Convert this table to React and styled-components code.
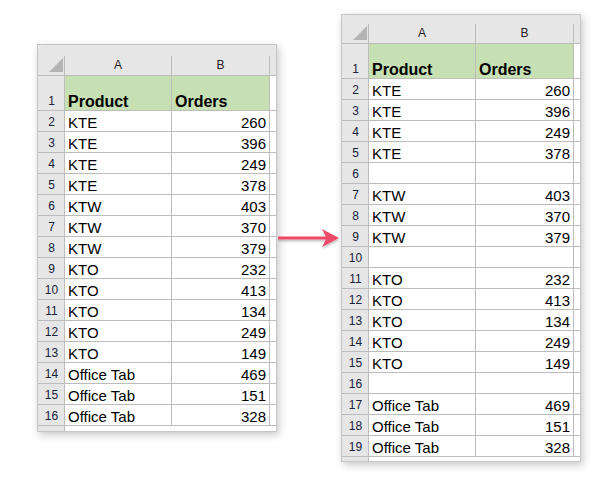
import React from "react";
import styled, { createGlobalStyle } from "styled-components";

const GlobalStyle = createGlobalStyle`
  html, body { margin: 0; padding: 0; background: #ffffff; }
  body { font-family: "Liberation Sans", Arial, sans-serif; }
`;

const GRID = "#bcbcbc";
const HEAD_BG = "#e6e6e6";

const Page = styled.div`
  display: flex;
  align-items: flex-start;
  padding-left: 37px;
  width: 595px;
  height: 483px;
  box-sizing: border-box;
`;

const Sheet = styled.div`
  margin-top: ${(p) => p.$top}px;
  width: 240px;
  box-sizing: border-box;
  border: 1px solid #c6c6c6;
  background: ${HEAD_BG};
  box-shadow: 2px 3px 8px rgba(0, 0, 0, 0.22);
`;

const TopStrip = styled.div`
  height: ${(p) => p.$h}px;
`;

const Grid = styled.div`
  display: grid;
  grid-template-columns: 27px 107px 98px 6px;
`;

const Base = styled.div`
  box-sizing: border-box;
  height: ${(p) => p.$h}px;
  border-bottom: 1px solid ${GRID};
  border-right: 1px solid ${GRID};
`;

const Corner = styled(Base)`
  position: relative;
  background: ${HEAD_BG};
  &::after {
    content: "";
    position: absolute;
    right: 1px;
    bottom: 3px;
    width: 14px;
    height: 14px;
    background: #b3b3b3;
    clip-path: polygon(100% 0, 100% 100%, 0 100%);
  }
`;

const ColHead = styled(Base)`
  background: ${HEAD_BG};
  display: flex;
  align-items: flex-end;
  justify-content: center;
  font-size: 12px;
  line-height: 15px;
  padding-bottom: 2px;
  color: #222;
`;

const HeadFill = styled.div`
  height: ${(p) => p.$h}px;
  box-sizing: border-box;
  border-bottom: 1px solid ${GRID};
  background: ${HEAD_BG};
`;

const RowNum = styled(Base)`
  background: ${HEAD_BG};
  display: flex;
  align-items: flex-end;
  justify-content: center;
  padding-left: 1px;
  padding-bottom: 1px;
  font-size: 12px;
  line-height: 15px;
  color: #18213a;
`;

const Cell = styled(Base)`
  background: ${(p) => (p.$green ? "#c6e0b4" : "#ffffff")};
  display: flex;
  align-items: flex-end;
  justify-content: ${(p) => (p.$right ? "flex-end" : "flex-start")};
  padding: 0 3px;
  font-size: ${(p) => (p.$bold ? 16 : 15)}px;
  line-height: 17px;
  font-weight: ${(p) => (p.$bold ? 700 : 400)};
  color: #000;
  white-space: nowrap;
`;

const Fill = styled.div`
  height: ${(p) => p.$h}px;
  box-sizing: border-box;
  border-bottom: 1px solid ${GRID};
  background: #ffffff;
`;

const BottomNum = styled.div`
  height: ${(p) => p.$h}px;
  box-sizing: border-box;
  border-right: 1px solid ${GRID};
  background: ${HEAD_BG};
`;

const BottomCell = styled.div`
  height: ${(p) => p.$h}px;
  background: #ffffff;
  grid-column: span 3;
`;

const ArrowWrap = styled.div`
  margin-top: 226px;
  width: 64px;
  display: flex;
  justify-content: center;
`;

function Spreadsheet({ top, strip, bottom, rows }) {
  return (
    <Sheet $top={top}>
      <TopStrip $h={strip} />
      <Grid>
        <Corner $h={20} />
        <ColHead $h={20}>A</ColHead>
        <ColHead $h={20}>B</ColHead>
        <HeadFill $h={20} />

        <RowNum $h={35}>1</RowNum>
        <Cell $h={35} $green $bold>Product</Cell>
        <Cell $h={35} $green $bold>Orders</Cell>
        <Fill $h={35} />

        {rows.map((r, i) => (
          <React.Fragment key={i}>
            <RowNum $h={21}>{i + 2}</RowNum>
            <Cell $h={21}>{r ? r[0] : ""}</Cell>
            <Cell $h={21} $right>{r ? r[1] : ""}</Cell>
            <Fill $h={21} />
          </React.Fragment>
        ))}

        <BottomNum $h={bottom} />
        <BottomCell $h={bottom} />
      </Grid>
    </Sheet>
  );
}

function Arrow() {
  return (
    <svg width="62" height="24" viewBox="0 0 62 24">
      <defs>
        <filter id="sh" x="-10%" y="-30%" width="120%" height="180%">
          <feDropShadow dx="0" dy="2" stdDeviation="1" floodColor="#000" floodOpacity="0.25" />
        </filter>
      </defs>
      <path
        d="M0 10.5 H48 L44 3 L61 12 L44 21 L48 13.5 H0 Z"
        fill="#ef4a6b"
        filter="url(#sh)"
      />
    </svg>
  );
}

const leftRows = [
  ["KTE", 260],
  ["KTE", 396],
  ["KTE", 249],
  ["KTE", 378],
  ["KTW", 403],
  ["KTW", 370],
  ["KTW", 379],
  ["KTO", 232],
  ["KTO", 413],
  ["KTO", 134],
  ["KTO", 249],
  ["KTO", 149],
  ["Office Tab", 469],
  ["Office Tab", 151],
  ["Office Tab", 328],
];

const rightRows = [
  ["KTE", 260],
  ["KTE", 396],
  ["KTE", 249],
  ["KTE", 378],
  null,
  ["KTW", 403],
  ["KTW", 370],
  ["KTW", 379],
  null,
  ["KTO", 232],
  ["KTO", 413],
  ["KTO", 134],
  ["KTO", 249],
  ["KTO", 149],
  null,
  ["Office Tab", 469],
  ["Office Tab", 151],
  ["Office Tab", 328],
];

export default function App() {
  return (
    <>
      <GlobalStyle />
      <Page>
        <Spreadsheet top={44} strip={11} bottom={5} rows={leftRows} />
        <ArrowWrap>
          <Arrow />
        </ArrowWrap>
        <Spreadsheet top={14} strip={9} bottom={4} rows={rightRows} />
      </Page>
    </>
  );
}
